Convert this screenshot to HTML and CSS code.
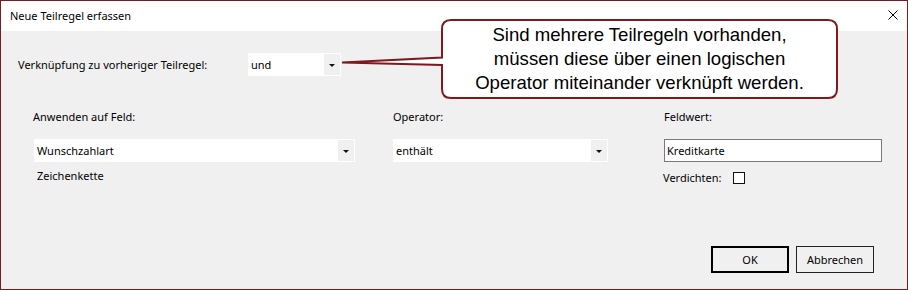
FILE: index.html
```html
<!DOCTYPE html>
<html lang="de">
<head>
<meta charset="utf-8">
<title>Neue Teilregel erfassen</title>
<link rel="stylesheet" href="styles.css">
</head>
<body>
<div class="window">
  <div class="titlebar">
    <span class="title">Neue Teilregel erfassen</span>
    <svg class="close" width="10" height="10" viewBox="0 0 10 10"><path d="M0.5 0.5 L9.5 9.5 M9.5 0.5 L0.5 9.5" stroke="#000" stroke-width="1" fill="none"/></svg>
  </div>
  <div class="content">
    <div class="row-link">
      <span class="link-label">Verknüpfung zu vorheriger Teilregel:</span>
      <div class="combo combo-small"><span class="combo-text">und</span><span class="combo-btn"><span class="arrow"></span></span></div>
    </div>
    <div class="fields">
      <span class="label">Anwenden auf Feld:</span>
      <span class="label">Operator:</span>
      <span class="label">Feldwert:</span>
      <div class="combo combo-field"><span class="combo-text">Wunschzahlart</span><span class="combo-btn"><span class="arrow"></span></span></div>
      <div class="combo combo-op"><span class="combo-text">enthält</span><span class="combo-btn"><span class="arrow"></span></span></div>
      <div class="textbox">Kreditkarte</div>
      <span class="type">Zeichenkette</span>
      <span></span>
      <div class="check-row"><span class="check-label">Verdichten:</span><span class="checkbox"></span></div>
    </div>
    <div class="buttons">
      <div class="btn btn-default">OK</div>
      <div class="btn">Abbrechen</div>
    </div>
  </div>
  <svg class="callout-shape" width="908" height="290" viewBox="0 0 908 290">
    <path d="M451 20 H828 Q837 20 837 29 V89 Q837 98 828 98 H451 Q442 98 442 89 V65 L342 62.5 L442 57.5 V29 Q442 20 451 20 Z" fill="#fff" stroke="#7c1a20" stroke-width="2"/>
  </svg>
  <div class="callout-text">Sind mehrere Teilregeln vorhanden,<br>müssen diese über einen logischen<br>Operator miteinander verknüpft werden.</div>
</div>
</body>
</html>
```
FILE: styles.css
```css
* { box-sizing: border-box; }
html, body { margin: 0; padding: 0; }
body {
  width: 908px;
  height: 290px;
  overflow: hidden;
  font-family: "Noto Sans", "DejaVu Sans", sans-serif;
  font-size: 11px;
  color: #000;
  background: #fff;
}
.window {
  position: relative;
  width: 908px;
  height: 290px;
  border: 1px solid #7c1a20;
  display: flex;
  flex-direction: column;
}
.titlebar {
  height: 30px;
  background: #fff;
  display: flex;
  align-items: center;
  justify-content: space-between;
  padding-left: 9px;
  padding-right: 9px;
  font-size: 11px;
}
.title { line-height: 16px; }
.close { display: block; margin-top: -3px; }
.content {
  flex: 1;
  background: #f0f0f0;
  display: flex;
  flex-direction: column;
  padding: 22px 33px 16px 0;
}
.row-link {
  display: flex;
  align-items: center;
  padding-left: 17px;
}
.link-label { width: 230px; line-height: 16px; }
.combo {
  height: 23px;
  background: #fff;
  border: 1px solid #fff;
  display: flex;
  align-items: stretch;
}
.combo-text {
  flex: 1;
  padding-left: 2px;
  line-height: 21px;
}
.combo-btn {
  width: 16px;
  background: #f0f0f0;
  display: flex;
  align-items: center;
  justify-content: center;
}
.arrow {
  width: 0;
  height: 0;
  border-left: 3px solid transparent;
  border-right: 3px solid transparent;
  border-top: 3px solid #111;
  margin-top: 1px;
}
.combo-small { width: 93px; }
.fields {
  display: grid;
  grid-template-columns: 359px 271px 218px;
  grid-template-rows: auto auto auto;
  margin-left: 33px;
  margin-top: 33px;
}
.label { line-height: 16px; align-self: start; }
.fields .combo, .fields .textbox { margin-top: 14px; }
.fields .label:first-child { margin-left: -1px; }
.combo-field { width: 321px; }
.combo-op { width: 215px; }
.textbox {
  width: 218px;
  height: 23px;
  background: #fff;
  border: 1px solid #7a7a7a;
  padding-left: 2px;
  line-height: 21px;
}
.type { margin-top: 6px; margin-left: 3px; line-height: 16px; }
.check-row {
  display: flex;
  align-items: center;
  margin-top: 10px;
  margin-left: -1px;
  height: 12px;
}
.check-label { width: 70px; line-height: 16px; }
.checkbox {
  width: 12px;
  height: 12px;
  border: 1px solid #111;
  background: #fff;
}
.buttons {
  margin-top: auto;
  display: flex;
  justify-content: flex-end;
  gap: 7px;
}
.btn {
  width: 78px;
  height: 27px;
  border: 1px solid #222;
  background: #f0f0f0;
  display: flex;
  align-items: center;
  justify-content: center;
}
.btn-default { border: 2px solid #000; }
.callout-shape {
  position: absolute;
  left: -1px;
  top: -1px;
  pointer-events: none;
}
.callout-text {
  position: absolute;
  left: 441px;
  top: 19px;
  width: 395px;
  padding-top: 3px;
  text-align: center;
  font-family: "Liberation Sans", Arial, sans-serif;
  font-size: 18.6px;
  line-height: 24px;
  color: #000;
}
```
